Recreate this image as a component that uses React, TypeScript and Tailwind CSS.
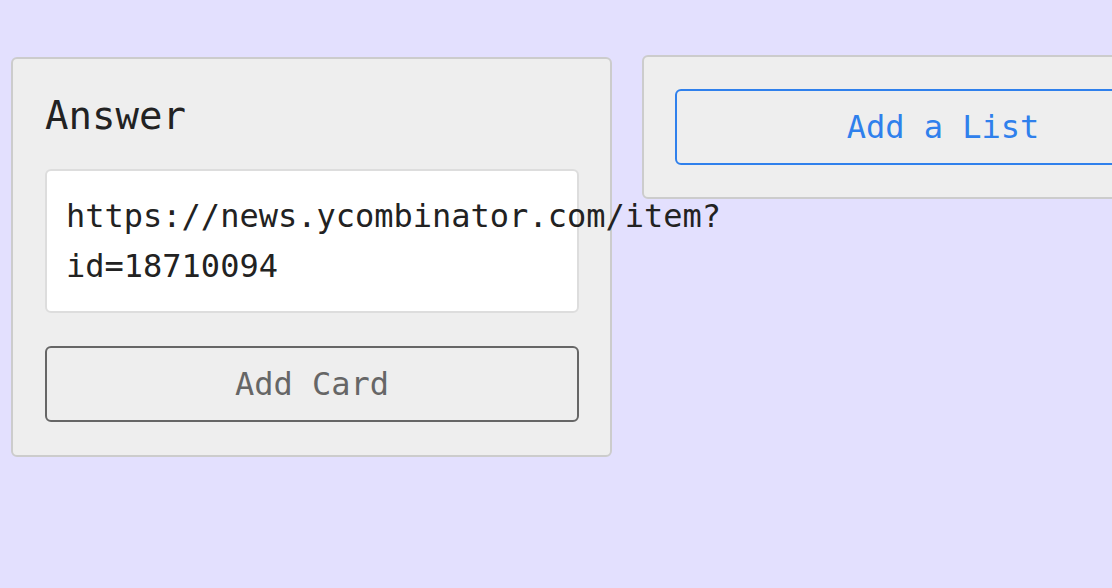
const mono = "font-['DejaVu_Sans_Mono',monospace]";

function ListCard() {
  return (
    <div className="mt-[2px] w-[601px] shrink-0 rounded-[6px] border-2 border-[#cccccc] bg-[#eeeeee] pl-[32px] pr-[31px] pt-[33px] pb-[33px]">
      <h2 className="text-[39px] leading-[48px] text-[#222222]">Answer</h2>
      <div className="mt-[29px] rounded-[6px] border-2 border-[#dddddd] bg-white px-[19px] py-[20px] text-[32px] leading-[50px] text-[#222222] whitespace-nowrap">
        https://news.ycombinator.com/item?
        <br />
        id=18710094
      </div>
      <button className="mt-[33px] flex h-[76px] w-full items-center justify-center rounded-[6px] border-2 border-[#666666] text-[32px] text-[#666666]">
        Add Card
      </button>
    </div>
  );
}

export default function App() {
  return (
    <div
      className={`${mono} flex h-[588px] w-[1112px] items-start gap-[30px] overflow-hidden bg-[#e3e0fe] pl-[11px] pt-[55px]`}
    >
      <ListCard />
      <div className="w-[602px] shrink-0 rounded-[6px] border-2 border-[#cccccc] bg-[#eeeeee] px-[31px] py-[32px]">
        <button className="flex h-[76px] w-[536px] items-center justify-center rounded-[6px] border-2 border-[#2f80ec] text-[32px] text-[#2f80ec]">
          Add a List
        </button>
      </div>
    </div>
  );
}
